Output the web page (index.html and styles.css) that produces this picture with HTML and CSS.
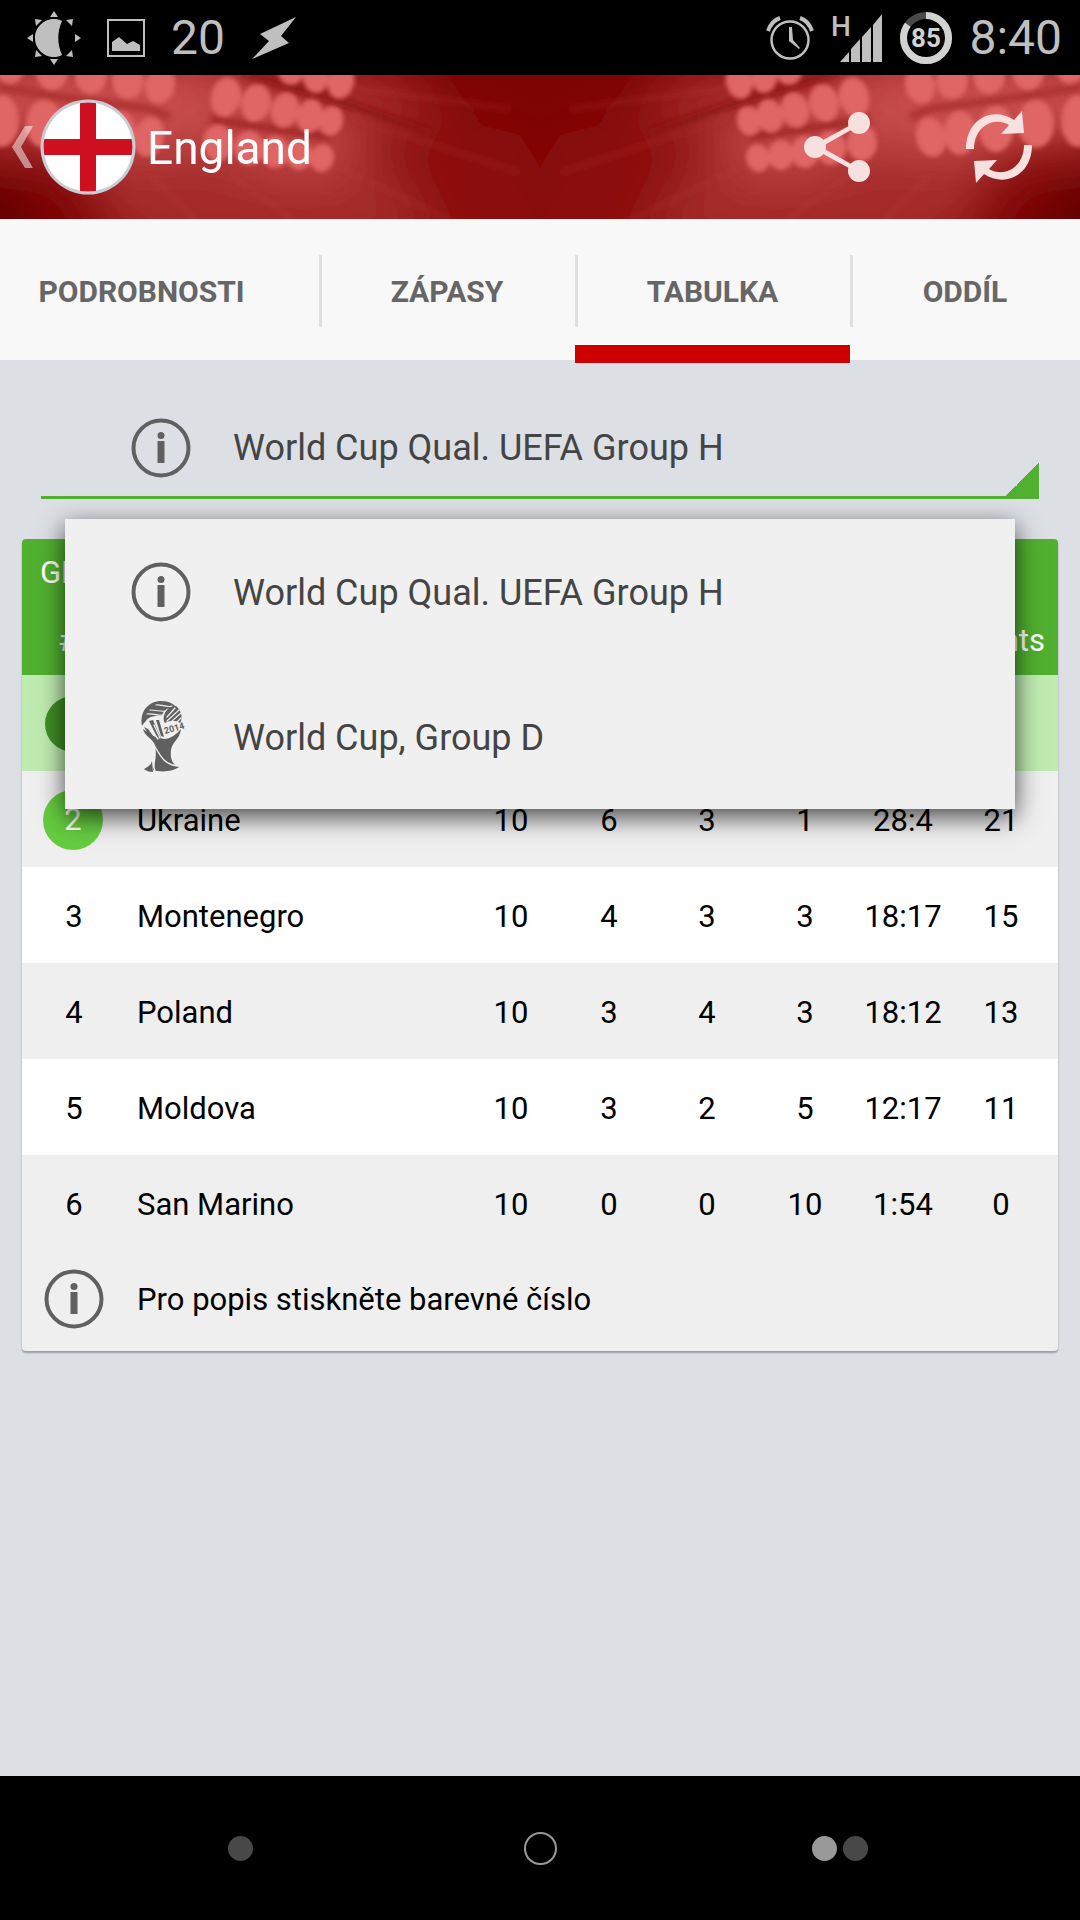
FILE: index.html
```html
<!DOCTYPE html>
<html lang="cs">
<head>
  <meta charset="UTF-8">
  <meta name="viewport" content="width=device-width, initial-scale=1.0">
  <title>England</title>
  <link rel="stylesheet" href="styles.css">
</head>
<body>
  <!-- Shared icons -->
  <svg class="defs" width="0" height="0" aria-hidden="true">
    <symbol id="icon-info" viewBox="0 0 60 60">
      <circle cx="30" cy="30" r="27.500" fill="none" stroke="currentColor" stroke-width="4"/>
      <circle cx="30" cy="17.500" r="3.500" fill="currentColor"/>
      <path d="M26.500 23h7v22h-7z" fill="currentColor"/>
    </symbol>
  </svg>

  <div class="status-bar">
    <div class="status-group">
      <svg width="54" height="54" viewBox="0 0 54 54" fill="#bfbfbf">
        <path d="M35 10C24 4 8 12 8 27s16 23 27 17c-5-11-5-23 0-34z"/>
        <path d="M27 0l4 6h-8zM27 54l4-6h-8zM0 27l6-4v8zM54 27l-6-4v8zM8 8l7 1-6 6zM46 8l-7 1 6 6zM8 46l7-1-6-6zM46 46l-7-1 6-6z"/>
      </svg>
      <svg width="38" height="38" viewBox="0 0 38 38">
        <rect x="1" y="1" width="36" height="36" fill="none" stroke="#bfbfbf" stroke-width="2"/>
        <path d="M5 32v-9l7-5 8 7 6-3 7 4v6z" fill="#bfbfbf"/>
      </svg>
      <span>20</span>
      <svg width="46" height="44" viewBox="0 0 46 44">
        <path d="M45 1L9 18l9 7L1 43l37-16-8-7z" fill="#bfbfbf"/>
      </svg>
    </div>
    <div class="status-group right">
      <svg width="48" height="46" viewBox="0 0 48 46" fill="none" stroke="#bfbfbf">
        <circle cx="24" cy="25" r="18.500" stroke-width="2.500"/>
        <path d="M23 12h3l1 13 7 8-1 1-10-8z" fill="#bfbfbf" stroke="none"/>
        <path d="M2 16C4 10 8 5 14 3M46 16C44 10 40 5 34 3" stroke-width="4"/>
      </svg>
      <svg width="52" height="60" viewBox="0 0 52 60" fill="#bfbfbf">
        <text x="0" y="28" class="net">H</text>
        <path d="M9 54l9-10v10zM20 54V41l9-10v23zM31 54V29l9-10v35zM42 54V17L51 6v48z"/>
      </svg>
      <svg width="52" height="52" viewBox="0 0 52 52">
        <circle cx="26" cy="26" r="22.500" fill="none" stroke="#4a4a4a" stroke-width="7"/>
        <circle cx="26" cy="26" r="22.500" fill="none" stroke="#d2d2d2" stroke-width="7" pathLength="100" stroke-dasharray="85 15" transform="rotate(-90 26 26)"/>
        <text x="26" y="35" text-anchor="middle" class="battery">85</text>
      </svg>
      <span>8:40</span>
    </div>
  </div>

  <header class="app-bar">
    <svg class="stadium" viewBox="0 0 1080 144" preserveAspectRatio="xMidYMid slice" aria-hidden="true">
      <defs>
        <filter id="soft" x="-20%" y="-20%" width="140%" height="140%"><feGaussianBlur stdDeviation="2"/></filter>
        <filter id="glow" x="-50%" y="-100%" width="200%" height="300%"><feGaussianBlur stdDeviation="26"/></filter>
        <filter id="ray" x="-20%" y="-20%" width="140%" height="140%"><feGaussianBlur stdDeviation="3"/></filter>
        <g id="lights">
          <g filter="url(#glow)">
            <path d="M360 20L520 60 600 190 340 190z" fill="#8c1010"/>
            <path d="M60 60L300 50 390 90 440 180 120 180z" fill="#a62a2a"/>
            <path d="M300-20L390-10 450 40 340 70z" fill="#a42626"/>
            <ellipse cx="110" cy="26" rx="190" ry="48" fill="#cc5050"/>
            <ellipse cx="270" cy="50" rx="90" ry="42" transform="rotate(18 270 50)" fill="#c24646"/>
            <path d="M-60 110L10 110 50 190-60 190z" fill="#600000"/>
          </g>
          <g filter="url(#ray)" fill="none">
            <path d="M245-3L350 30 430 58" stroke="#8a1010" stroke-width="8" opacity=".8"/>
            <path d="M0 12L60 22 150 34 170 42" stroke="#ac3030" stroke-width="8"/>
            <path d="M210 44L330 62" stroke="#9c2222" stroke-width="6"/>
            <path d="M330 88L460 150M350 12L510 34M150 100L200 150M230 100L300 150" stroke="#b83c3c" stroke-width="3" opacity=".4"/>
            <path d="M350 42L520 98" stroke="#a83030" stroke-width="4" opacity=".4"/>
          </g>
          <g filter="url(#soft)" fill="#e06565">
            <ellipse cx="10" cy="-8" rx="15" ry="17"/>
            <ellipse cx="52" cy="-2" rx="16" ry="17"/>
            <ellipse cx="91" cy="1" rx="16" ry="18"/>
            <ellipse cx="128" cy="5" rx="16" ry="19"/>
            <ellipse cx="160" cy="10" rx="15" ry="19" transform="rotate(12 160 10)"/>
            <ellipse cx="2" cy="46" rx="17" ry="26"/>
            <ellipse cx="44" cy="49" rx="18" ry="24"/>
            <ellipse cx="84" cy="54" rx="17" ry="23"/>
            <ellipse cx="120" cy="58" rx="16" ry="22"/>
            <ellipse cx="149" cy="62" rx="15" ry="20" transform="rotate(12 149 62)"/>
            <ellipse cx="291" cy="-4" rx="13" ry="14"/>
            <ellipse cx="316" cy="2" rx="13" ry="16"/>
            <ellipse cx="341" cy="7" rx="13" ry="17" transform="rotate(15 341 7)"/>
            <ellipse cx="226" cy="22" rx="15" ry="20" transform="rotate(12 226 22)"/>
            <ellipse cx="256" cy="28" rx="15" ry="19" transform="rotate(12 256 28)"/>
            <ellipse cx="285" cy="35" rx="14" ry="18" transform="rotate(12 285 35)"/>
            <ellipse cx="310" cy="41" rx="13" ry="17" transform="rotate(12 310 41)"/>
            <ellipse cx="331" cy="46" rx="12" ry="15" transform="rotate(15 331 46)"/>
            <ellipse cx="218" cy="68" rx="15" ry="18"/>
            <ellipse cx="249" cy="73" rx="15" ry="17"/>
            <ellipse cx="275" cy="77" rx="14" ry="16"/>
            <ellipse cx="299" cy="80" rx="13" ry="15"/>
            <ellipse cx="322" cy="83" rx="12" ry="14" transform="rotate(15 322 83)"/>
          </g>
        </g>
        <clipPath id="half"><path d="M0 0h540v144H0z"/></clipPath>
      </defs>
      <g clip-path="url(#half)"><use href="#lights"/></g>
      <g transform="translate(1080 0) scale(-1 1)"><g clip-path="url(#half)"><use href="#lights"/></g></g>
    </svg>
    <a class="up" href="#" aria-label="Zpět">
      <svg width="22" height="42" viewBox="0 0 22 42" fill="#fff" opacity=".5"><path d="M13 0h8L9 21l12 21h-8L0 21z"/></svg>
      <svg class="flag" width="96" height="98" viewBox="0 0 96 98">
        <clipPath id="disc"><circle cx="48" cy="49" r="44.500"/></clipPath>
        <circle cx="48" cy="49" r="47.500" fill="#c9ccd4"/>
        <g clip-path="url(#disc)">
          <path d="M0 0h96v98H0z" fill="#fff"/>
          <path d="M40 0h16v98H40zM0 41h96v16H0z" fill="#ce1021"/>
        </g>
      </svg>
    </a>
    <h1>England</h1>
    <button class="action" type="button" aria-label="Sdílet">
      <svg width="66" height="70" viewBox="0 0 66 70" fill="#f7e0e0">
        <path d="M10 33l44-24 2 4-39 22 39 22-2 4-44-24z"/>
        <circle cx="11" cy="35" r="11"/><circle cx="55" cy="11" r="11"/><circle cx="55" cy="59" r="11"/>
      </svg>
    </button>
    <button class="action" type="button" aria-label="Obnovit">
      <svg width="66" height="72" viewBox="0 0 66 72" fill="#f7e0e0">
        <path id="arrow" d="M0 38C0 8 27-5 48 9l8-9 2 22-23 1 8-9C27 5 8 16 8 38z"/>
        <use href="#arrow" transform="rotate(180 33 36)"/>
      </svg>
    </button>
  </header>

  <nav class="tabs">
    <a class="tab" href="#">PODROBNOSTI</a>
    <a class="tab" href="#">ZÁPASY</a>
    <a class="tab active" href="#" aria-current="page">TABULKA</a>
    <a class="tab" href="#">ODDÍL</a>
  </nav>

  <main>
    <div class="picker">
      <div class="picker-field">
        <svg class="icon"><use href="#icon-info"/></svg>
        <select id="group" aria-label="Skupina">
          <option selected>World Cup Qual. UEFA Group H</option>
          <option>World Cup, Group D</option>
        </select>
      </div>
      <div class="menu">
        <button class="menu-item" type="button" value="0">
          <svg class="icon"><use href="#icon-info"/></svg>
          <span>World Cup Qual. UEFA Group H</span>
        </button>
        <button class="menu-item" type="button" value="1">
          <svg class="icon trophy" viewBox="0 0 60 72">
            <g fill="#606060">
              <path d="M11 25C8 8 20 0 30 0c8 0 14 3 17 9-6-5-15-1-16 6-8-1-15 2-16 5-2 2-3 3-4 5z"/>
              <path d="M45 5c6 5 7 13 4 17-4-3-10-3-15 0-4-6 2-18 11-17z"/>
              <path d="M12 28l10 7 11 3c6 0 13-5 17-10-1 10-9 13-10 21-1 9 1 14 8 17-5 4-17 6-26 3 3-10 4-20 1-27-3-5-10-8-11-14z"/>
              <path d="M13 68c4-2 7-4 8-8l1 11c-4 0-7-1-9-3z"/>
              <path d="M13 26l4 2 9 12-7-4zM18 20l4-1 8 18-4-1zM25 19l3 0 5 17-3-1z"/>
            </g>
            <g fill="none" stroke="#f0f0f0" stroke-linecap="round">
              <path d="M19 9c6 0 12 2 15 1M25 4c5-1 11 3 16 1M16 13c6-1 12 2 16 1" stroke-width="1.200"/>
              <path d="M36 16l8-9M36 20L48 9M41 20l9-8M46 21l4-4" stroke-width="1.200"/>
              <path d="M18 27l9 11M23 24l6 13" stroke-width="1.300"/>
              <path d="M23 44c6 10 10 20 24 21M23 56c0 6-1 10 1 14" stroke-width="1.400"/>
            </g>
            <text x="34" y="33" class="year" transform="rotate(-16 34 33)">2014</text>
          </svg>
          <span>World Cup, Group D</span>
        </button>
      </div>
    </div>

    <section class="card">
      <h2>GROUP H</h2>
      <table>
        <colgroup>
          <col class="col-rank"><col><col class="col-num"><col class="col-num"><col class="col-num"><col class="col-num"><col class="col-num"><col class="col-points">
        </colgroup>
        <thead>
          <tr><th>#</th><th></th><th></th><th></th><th></th><th></th><th></th><th>Points</th></tr>
        </thead>
        <tbody>
          <tr class="current"><td><span class="rank first"></span></td><td></td><td></td><td></td><td></td><td></td><td></td><td></td></tr>
          <tr><td><span class="rank">2</span></td><td class="team">Ukraine</td><td>10</td><td>6</td><td>3</td><td>1</td><td>28:4</td><td>21</td></tr>
          <tr><td>3</td><td class="team">Montenegro</td><td>10</td><td>4</td><td>3</td><td>3</td><td>18:17</td><td>15</td></tr>
          <tr><td>4</td><td class="team">Poland</td><td>10</td><td>3</td><td>4</td><td>3</td><td>18:12</td><td>13</td></tr>
          <tr><td>5</td><td class="team">Moldova</td><td>10</td><td>3</td><td>2</td><td>5</td><td>12:17</td><td>11</td></tr>
          <tr><td>6</td><td class="team">San Marino</td><td>10</td><td>0</td><td>0</td><td>10</td><td>1:54</td><td>0</td></tr>
        </tbody>
      </table>
      <p class="hint">
        <svg class="icon"><use href="#icon-info"/></svg>
        <span>Pro popis stiskněte barevné číslo</span>
      </p>
    </section>
  </main>

  <footer class="nav-bar">
    <button type="button" aria-label="Zpět"><span class="dot"></span></button>
    <button type="button" aria-label="Domů"><span class="ring"></span></button>
    <button type="button" aria-label="Poslední aplikace"><span class="dot light"></span><span class="dot"></span></button>
  </footer>

  <script>
    const group = document.getElementById('group');
    const menu = document.querySelector('.menu');

    menu.querySelectorAll('.menu-item').forEach(item => {
      item.addEventListener('click', () => {
        group.selectedIndex = Number(item.value);
        menu.hidden = true;
      });
    });
  </script>
</body>
</html>
```
FILE: styles.css
```css
* { box-sizing: border-box; margin: 0; padding: 0; }
body {
  display: flex;
  flex-direction: column;
  min-height: 100vh;
  background-color: #dcdfe4;
  font-family: Roboto, sans-serif;
  font-size: 30px;
  color: #000;
}
button, select { font: inherit; color: inherit; border: none; background: none; cursor: pointer; }
a { color: inherit; text-decoration: none; }
svg { display: block; flex-shrink: 0; }
.defs { position: absolute; }
.icon { width: 60px; height: 60px; color: #606060; }

/* Status bar */
.status-bar {
  display: flex;
  justify-content: space-between;
  align-items: center;
  height: 75px;
  padding: 0 18px 0 27px;
  background-color: #000;
  color: #bfbfbf;
  font-size: 48px;
}
.status-group { display: flex; align-items: center; gap: 26px; }
.status-group.right { gap: 17px; }
.net { font-size: 28px; font-weight: 500; }
.battery { font-size: 26px; font-weight: 700; fill: #d2d2d2; }

/* App bar */
.app-bar {
  position: relative;
  display: flex;
  align-items: center;
  height: 144px;
  padding-left: 12px;
  overflow: hidden;
  background-color: #7e0404;
  color: #fff;
}
.stadium { position: absolute; top: 0; left: 0; width: 100%; height: 100%; }
.up { position: relative; display: flex; align-items: center; gap: 6px; }
h1 { position: relative; flex: 1; padding: 2px 0 0 11px; font-size: 46px; font-weight: 400; }
.action {
  position: relative;
  display: flex;
  align-items: center;
  justify-content: center;
  width: 162px;
  height: 144px;
}

/* Tabs */
.tabs {
  display: grid;
  grid-template-columns: 319fr 256fr 275fr 230fr;
  height: 141px;
  background-color: #f8f8f8;
  color: #666;
  font-weight: 700;
}
.tab {
  position: relative;
  display: flex;
  align-items: center;
  justify-content: center;
  padding-top: 3px;
}
.tab:first-child { padding-right: 36px; }
.tab + .tab { background: linear-gradient(#dfdfdf, #dfdfdf) 0 36px / 3px 72px no-repeat; }
.tab.active::after {
  content: "";
  position: absolute;
  right: 0;
  bottom: -3px;
  left: 0;
  height: 18px;
  background-color: #c00;
}

main { flex: 1; padding: 30px 22px; }

/* Group picker */
.picker { position: relative; margin: 0 19px; color: #444; font-size: 36px; }
.picker-field {
  display: flex;
  align-items: center;
  height: 109px;
  padding: 10px 0 0 90px;
  border-bottom: 3px solid #51b030;
  background: linear-gradient(135deg, transparent 50%, #51b030 50%) right bottom / 33px 33px no-repeat;
}
.picker-field select { flex: 1; height: 100%; padding-left: 42px; appearance: none; outline: none; }
.menu {
  position: absolute;
  top: 129px;
  right: 24px;
  left: 24px;
  z-index: 2;
  background-color: #f0f0f0;
  box-shadow: 0 8px 24px rgba(0,0,0,0.7);
}
.menu-item {
  display: flex;
  align-items: center;
  gap: 42px;
  width: 100%;
  height: 145px;
  padding-left: 66px;
  text-align: left;
}
.menu-item span { padding-top: 2px; }
.trophy { height: 72px; }
.year { font-size: 9px; font-weight: 700; fill: #606060; }

/* Standings */
.card {
  margin-top: 40px;
  overflow: hidden;
  border-radius: 4px;
  background-color: #efefef;
  box-shadow: 0 2px 2px rgba(0,0,0,0.3);
  font-size: 31px;
}
h2 {
  height: 66px;
  padding: 15px 18px 0;
  background-color: #51b030;
  color: #fff;
  font-size: 31px;
  font-weight: 400;
}
table { width: 100%; border-collapse: collapse; table-layout: fixed; }
.col-rank { width: 104px; }
.col-num { width: 98px; }
.col-points { width: 106px; }
tr { background-color: #efefef; }
tbody tr:nth-child(odd) { background-color: #fff; }
tbody tr.current { background-color: #bfebb0; }
th { height: 70px; background-color: #51b030; color: #fff; font-weight: 400; }
th:first-child { padding-left: 36px; text-align: left; }
td { height: 96px; padding-top: 2px; text-align: center; }
th:last-child, td:last-child { padding-right: 8px; }
.team { padding-left: 11px; text-align: left; }
.rank {
  display: block;
  width: 60px;
  height: 60px;
  margin-left: 21px;
  border-radius: 50%;
  background-color: #65cc40;
  color: #fff;
  line-height: 60px;
}
.rank.first { width: 56px; height: 56px; margin-left: 23px; background-color: #3f8f25; }
.hint {
  display: flex;
  align-items: center;
  gap: 33px;
  height: 100px;
  padding: 0 22px 4px;
}

/* Navigation bar */
.nav-bar { display: flex; height: 144px; padding: 0 90px; background-color: #000; }
.nav-bar button { flex: 1; display: flex; align-items: center; justify-content: center; gap: 6px; }
.dot { width: 25px; height: 25px; border-radius: 50%; background-color: #484848; }
.dot.light { background-color: #999; }
.ring { width: 33px; height: 33px; border: 2px solid #999; border-radius: 50%; }
```
